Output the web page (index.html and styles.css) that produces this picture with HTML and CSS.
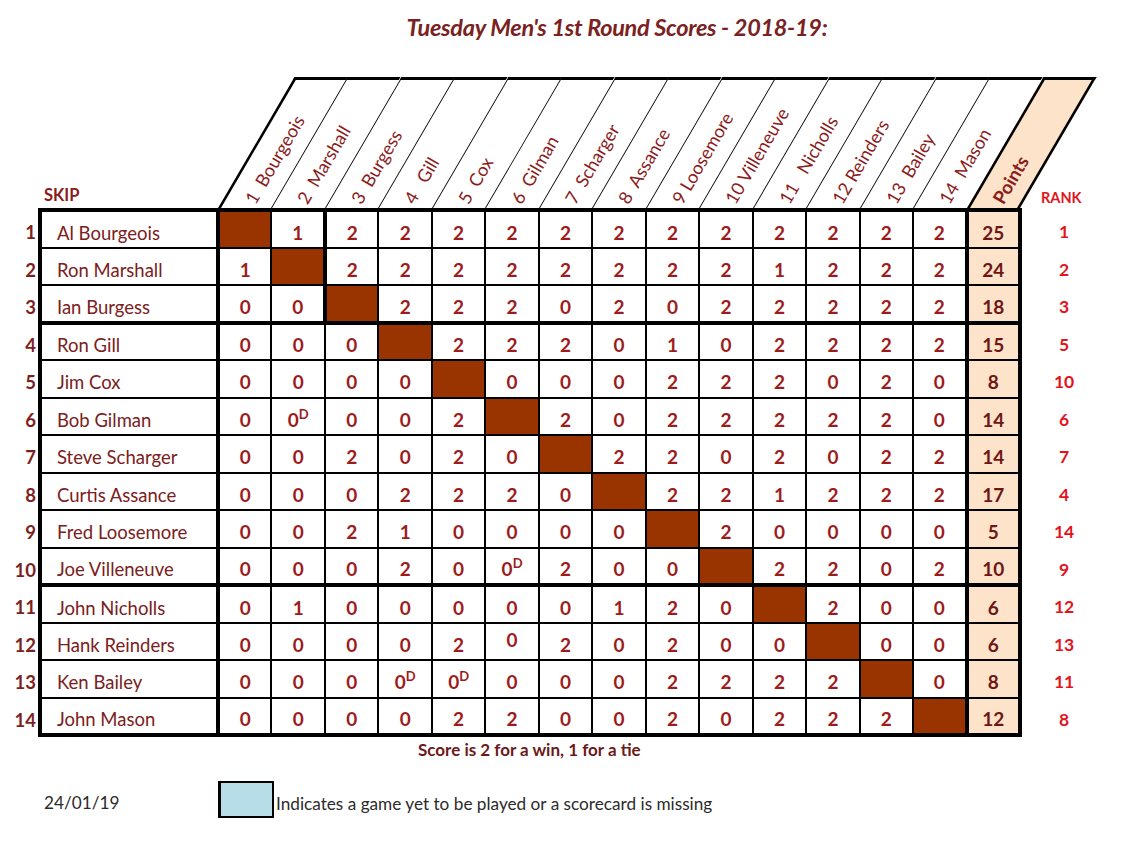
FILE: index.html
```html
<!DOCTYPE html>
<html lang="en">
<head>
<meta charset="utf-8">
<title>Tuesday Men's 1st Round Scores - 2018-19</title>
<link rel="stylesheet" href="styles.css">
</head>
<body>
<div class="page">
  <h1 class="title">Tuesday Men's 1st Round Scores - 2018-19:</h1>

  <div class="head">
    <div class="skip">SKIP</div>
    <div class="hc first"><span class="lbl">1  Bourgeois</span></div>
    <div class="hc"><span class="lbl">2  Marshall</span></div>
    <div class="hc"><span class="lbl">3  Burgess</span></div>
    <div class="hc"><span class="lbl">4   Gill</span></div>
    <div class="hc"><span class="lbl">5  Cox</span></div>
    <div class="hc"><span class="lbl">6  Gilman</span></div>
    <div class="hc"><span class="lbl">7  Scharger</span></div>
    <div class="hc"><span class="lbl">8  Assance</span></div>
    <div class="hc"><span class="lbl">9 Loosemore</span></div>
    <div class="hc"><span class="lbl">10 Villeneuve</span></div>
    <div class="hc"><span class="lbl">11   Nicholls</span></div>
    <div class="hc"><span class="lbl">12 Reinders</span></div>
    <div class="hc"><span class="lbl">13  Bailey</span></div>
    <div class="hc"><span class="lbl">14  Mason</span></div>
    <div class="hc pts"><span class="lbl bold">Points</span></div>
    <div class="rank-h">RANK</div>
  </div>

  <table class="grid">
    <colgroup>
      <col class="c-rn"><col class="c-name">
      <col class="c-s"><col class="c-s"><col class="c-s"><col class="c-s"><col class="c-s"><col class="c-s"><col class="c-s">
      <col class="c-s"><col class="c-s"><col class="c-s"><col class="c-s"><col class="c-s"><col class="c-s"><col class="c-s">
      <col class="c-s"><col class="c-rank">
    </colgroup>
    <tbody>
      <tr class="r-first">
        <td class="rn">1</td><td class="nm">Al Bourgeois</td>
        <td class="x"></td><td class="tr">1</td><td>2</td><td>2</td><td>2</td><td>2</td><td>2</td><td>2</td><td>2</td><td>2</td><td>2</td><td>2</td><td>2</td><td>2</td>
        <td class="pt">25</td><td class="rk">1</td>
      </tr>
      <tr>
        <td class="rn">2</td><td class="nm">Ron Marshall</td>
        <td>1</td><td class="x tr"></td><td>2</td><td>2</td><td>2</td><td>2</td><td>2</td><td>2</td><td>2</td><td>2</td><td>1</td><td>2</td><td>2</td><td>2</td>
        <td class="pt">24</td><td class="rk">2</td>
      </tr>
      <tr class="r-sep">
        <td class="rn">3</td><td class="nm">Ian Burgess</td>
        <td>0</td><td class="tr">0</td><td class="x"></td><td>2</td><td>2</td><td>2</td><td>0</td><td>2</td><td>0</td><td>2</td><td>2</td><td>2</td><td>2</td><td>2</td>
        <td class="pt">18</td><td class="rk">3</td>
      </tr>
      <tr>
        <td class="rn">4</td><td class="nm">Ron Gill</td>
        <td>0</td><td>0</td><td>0</td><td class="x"></td><td>2</td><td>2</td><td>2</td><td>0</td><td>1</td><td>0</td><td>2</td><td>2</td><td>2</td><td>2</td>
        <td class="pt">15</td><td class="rk">5</td>
      </tr>
      <tr>
        <td class="rn">5</td><td class="nm">Jim Cox</td>
        <td>0</td><td>0</td><td>0</td><td>0</td><td class="x"></td><td>0</td><td>0</td><td>0</td><td>2</td><td>2</td><td>2</td><td>0</td><td>2</td><td>0</td>
        <td class="pt">8</td><td class="rk">10</td>
      </tr>
      <tr>
        <td class="rn">6</td><td class="nm">Bob Gilman</td>
        <td>0</td><td>0<sup>D</sup></td><td>0</td><td>0</td><td>2</td><td class="x"></td><td>2</td><td>0</td><td>2</td><td>2</td><td>2</td><td>2</td><td>2</td><td>0</td>
        <td class="pt">14</td><td class="rk">6</td>
      </tr>
      <tr>
        <td class="rn">7</td><td class="nm">Steve Scharger</td>
        <td>0</td><td>0</td><td>2</td><td>0</td><td>2</td><td>0</td><td class="x"></td><td>2</td><td>2</td><td>0</td><td>2</td><td>0</td><td>2</td><td>2</td>
        <td class="pt">14</td><td class="rk">7</td>
      </tr>
      <tr>
        <td class="rn">8</td><td class="nm">Curtis Assance</td>
        <td>0</td><td>0</td><td>0</td><td>2</td><td>2</td><td>2</td><td>0</td><td class="x"></td><td>2</td><td>2</td><td>1</td><td>2</td><td>2</td><td>2</td>
        <td class="pt">17</td><td class="rk">4</td>
      </tr>
      <tr>
        <td class="rn">9</td><td class="nm">Fred Loosemore</td>
        <td>0</td><td>0</td><td>2</td><td>1</td><td>0</td><td>0</td><td>0</td><td>0</td><td class="x"></td><td>2</td><td>0</td><td>0</td><td>0</td><td>0</td>
        <td class="pt">5</td><td class="rk">14</td>
      </tr>
      <tr class="r-sep">
        <td class="rn">10</td><td class="nm">Joe Villeneuve</td>
        <td>0</td><td>0</td><td>0</td><td>2</td><td>0</td><td>0<sup>D</sup></td><td>2</td><td>0</td><td>0</td><td class="x"></td><td>2</td><td>2</td><td>0</td><td>2</td>
        <td class="pt">10</td><td class="rk">9</td>
      </tr>
      <tr>
        <td class="rn">11</td><td class="nm">John Nicholls</td>
        <td>0</td><td>1</td><td>0</td><td>0</td><td>0</td><td>0</td><td>0</td><td>1</td><td>2</td><td>0</td><td class="x"></td><td>2</td><td>0</td><td>0</td>
        <td class="pt">6</td><td class="rk">12</td>
      </tr>
      <tr>
        <td class="rn">12</td><td class="nm">Hank Reinders</td>
        <td>0</td><td>0</td><td>0</td><td>0</td><td>2</td><td class="raised">0</td><td>2</td><td>0</td><td>2</td><td>0</td><td>0</td><td class="x"></td><td>0</td><td>0</td>
        <td class="pt">6</td><td class="rk">13</td>
      </tr>
      <tr>
        <td class="rn">13</td><td class="nm">Ken Bailey</td>
        <td>0</td><td>0</td><td>0</td><td>0<sup>D</sup></td><td>0<sup>D</sup></td><td>0</td><td>0</td><td>0</td><td>2</td><td>2</td><td>2</td><td>2</td><td class="x"></td><td>0</td>
        <td class="pt">8</td><td class="rk">11</td>
      </tr>
      <tr class="r-last">
        <td class="rn">14</td><td class="nm">John Mason</td>
        <td>0</td><td>0</td><td>0</td><td>0</td><td>2</td><td>2</td><td>0</td><td>0</td><td>2</td><td>0</td><td>2</td><td>2</td><td>2</td><td class="x"></td>
        <td class="pt">12</td><td class="rk">8</td>
      </tr>
    </tbody>
  </table>

  <p class="note">Score is 2 for a win, 1 for a tie</p>

  <div class="foot">
    <span class="date">24/01/19</span>
    <span class="swatch"></span>
    <span class="legend">Indicates a game yet to be played or a scorecard is missing</span>
  </div>
</div>
</body>
</html>
```

FILE: styles.css
```css
html, body {
  margin: 0;
  padding: 0;
  background: #ffffff;
}

body {
  font-family: Lato, "Open Sans", "Liberation Sans", sans-serif;
  color: #7d1f1f;
}

.page {
  width: 1130px;
  padding-top: 12px;
}

.title {
  margin: 0;
  padding-left: 104px;
  text-align: center;
  font-size: 23.5px;
  font-weight: 700;
  font-style: italic;
  line-height: 30px;
  color: #7a2222;
  letter-spacing: -0.3px;
}

/* ---------- slanted header ---------- */
.head {
  display: grid;
  grid-template-columns: 218px repeat(15, 53.47px) 86px;
  height: 131px;
  margin-top: 35px;
}

.skip {
  align-self: end;
  padding: 0 0 3px 44px;
  font-size: 16.5px;
  font-weight: 700;
  color: #8a1c1c;
}

.hc {
  position: relative;
  border-top: 3px solid #000;
  border-left: 1.3px solid #000;
  transform: skewX(-30.3deg);
  transform-origin: 0 100%;
}

.hc.first {
  border-left-width: 3.5px;
}

.hc.pts {
  background: #fde3c9;
  border-left-width: 3.5px;
  border-right: 3.5px solid #000;
}

.lbl {
  position: absolute;
  left: 50%;
  bottom: 6px;
  height: 22px;
  margin-bottom: -11px;
  line-height: 22px;
  white-space: pre;
  font-size: 18px;
  color: #8a1c1c;
  transform-origin: 0 50%;
  transform: skewX(30.3deg) rotate(-59.7deg);
}

.lbl.bold {
  font-weight: 700;
  font-size: 18.5px;
}

.rank-h {
  align-self: end;
  padding: 0 0 2px 21px;
  font-size: 14.5px;
  font-weight: 700;
  color: #e0141c;
}

/* ---------- score grid ---------- */
.grid {
  table-layout: fixed;
  width: 1106px;
  border-collapse: collapse;
}

.c-rn { width: 40px; }
.c-name { width: 178px; }
.c-s { width: 53.47px; }
.c-rank { width: 86px; }

.grid tr {
  height: 37.5px;
}

.grid td {
  padding: 7px 0 0 0;
  border: 2px solid #000;
  text-align: center;
  font-size: 19px;
  font-weight: 700;
  color: #9c1c1c;
  line-height: 20px;
}

.grid td.rn {
  border: none;
  text-align: right;
  padding-right: 2px;
  font-size: 18.5px;
  color: #7d1f1f;
}

.grid td.nm {
  text-align: left;
  padding-left: 15px;
  font-weight: 400;
  font-size: 18.5px;
  color: #7b2020;
  border-left-width: 4px;
  border-right-width: 4px;
}

.grid td.x {
  background: #993300;
}

.grid td.tr {
  border-right-width: 4px;
}

.grid td.pt {
  background: #fde3c9;
  color: #6e1616;
  border-left-width: 4px;
  border-right-width: 4px;
}

.grid td.rk {
  border: none;
  font-size: 17.5px;
  color: #e3141c;
}

.grid td.raised {
  padding-top: 0;
  padding-bottom: 2px;
}

.grid tr.r-first td {
  border-top-width: 4px;
}

.grid tr.r-sep td {
  border-bottom-width: 4px;
}

.grid tr.r-last td {
  border-bottom-width: 4px;
}

.grid tr td.rn,
.grid tr td.rk {
  border: none;
}

.grid sup {
  font-size: 13px;
  line-height: 0;
  vertical-align: 8px;
}

/* ---------- footer ---------- */
.note {
  margin: 2px 0 0 0;
  padding-left: 418px;
  font-size: 17px;
  font-weight: 700;
  color: #6b1a1a;
}

.foot {
  display: flex;
  align-items: center;
  margin-top: 21px;
  color: #2b2b2b;
  font-size: 17.2px;
}

.date {
  width: 174px;
  padding-left: 44px;
  margin-top: 6px;
}

.swatch {
  width: 51px;
  height: 33px;
  background: #b7dde8;
  border: 2px solid #000;
  border-left-width: 3px;
}

.legend {
  padding-left: 2px;
  margin-top: 8px;
}
```
